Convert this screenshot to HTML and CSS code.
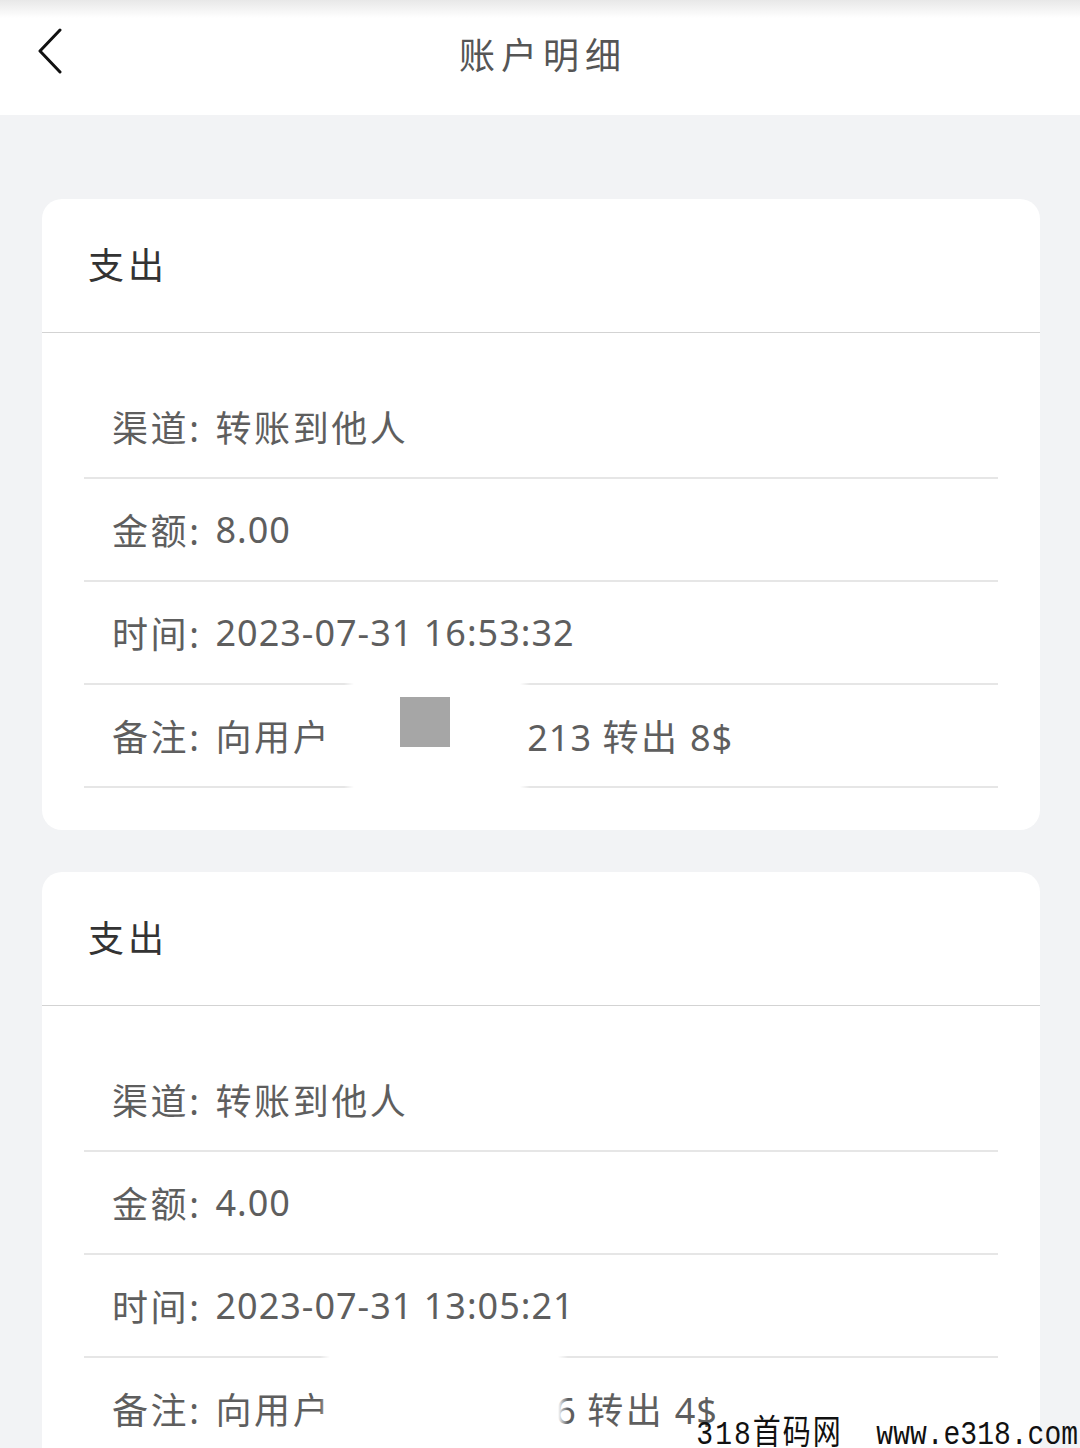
FILE: index.html
```html
<!DOCTYPE html>
<html>
<head>
    <meta charset="utf-8">
    <title>账户明细</title>
    <link rel="stylesheet" href="styles.css">
</head>
<body>
    <div class="topbar">
        <div class="back">
            <svg width="28" height="46" viewBox="0 0 28 46"><path d="M24 2 L4 23 L24 44" fill="none" stroke="#111" stroke-width="3" stroke-linecap="round" stroke-linejoin="round"/></svg>
        </div>
        <div class="title">账户明细</div>
        <div></div>
    </div>

    <div class="list">
        <div class="card">
            <div class="card-head">支出</div>
            <div class="card-body">
                <div class="row"><span class="wide">渠道:</span><span class="val wide">转账到他人</span></div>
                <div class="row"><span class="wide">金额:</span><span class="val">8.00</span></div>
                <div class="row"><span class="wide">时间:</span><span class="val">2023-07-31 16:53:32</span></div>
                <div class="row"><span class="wide">备注:</span><span class="val"><span class="wide">向用户</span><span class="gap gap-1"></span>213 <span class="wide">转出</span> 8$</span>
                    <div class="mask mask-1"><div class="mosaic"></div></div>
                </div>
            </div>
        </div>

        <div class="card">
            <div class="card-head">支出</div>
            <div class="card-body">
                <div class="row"><span class="wide">渠道:</span><span class="val wide">转账到他人</span></div>
                <div class="row"><span class="wide">金额:</span><span class="val">4.00</span></div>
                <div class="row"><span class="wide">时间:</span><span class="val">2023-07-31 13:05:21</span></div>
                <div class="row"><span class="wide">备注:</span><span class="val"><span class="wide">向用户</span><span class="gap gap-2"></span>6 <span class="wide">转出</span> 4$</span>
                    <div class="mask mask-2"></div>
                </div>
            </div>
        </div>
    </div>

    <div class="watermark"><span class="wm-site">318首码网</span>&nbsp;&nbsp;www.e318.com</div>
</body>
</html>
```

FILE: styles.css
```css
body {
    margin: 0;
    background-color: #f2f3f5;
    font-family: 'Noto Sans', 'Noto Sans CJK SC', sans-serif;
    width: 1080px;
    overflow: hidden;
}
.topbar {
    height: 115px;
    background: linear-gradient(#e8e8e8, #ffffff 18px);
    display: grid;
    grid-template-columns: 110px 1fr 110px;
    align-items: center;
}
.back {
    padding-left: 36px;
    padding-bottom: 14px;
    display: flex;
}
.title {
    text-align: center;
    font-size: 36px;
    letter-spacing: 6px;
    padding-left: 6px;
    color: #555555;
    padding-bottom: 8px;
}
.list {
    padding: 84px 40px 0 42px;
}
.card {
    background-color: #ffffff;
    border-radius: 20px;
    margin-bottom: 42px;
}
.card-head {
    height: 134px;
    box-sizing: border-box;
    padding-left: 46px;
    padding-bottom: 4px;
    display: flex;
    align-items: center;
    font-size: 36px;
    letter-spacing: 4px;
    color: #333333;
    border-bottom: 1px solid #d3d3d3;
}
.card-body {
    padding: 43px 42px 42px 42px;
}
.row {
    position: relative;
    height: 101px;
    display: flex;
    align-items: center;
    padding-left: 28px;
    font-size: 36px;
    letter-spacing: 1px;
    color: #5e5e5e;
    border-bottom: 2px solid #e6e6e6;
    white-space: nowrap;
}
.wide {
    letter-spacing: 2.6px;
}
.val {
    margin-left: 14px;
}
.gap {
    display: inline-block;
}
.gap-1 {
    width: 196px;
}
.gap-2 {
    width: 224px;
}
.mask {
    position: absolute;
    top: -2px;
    bottom: -4px;
    background: linear-gradient(90deg, rgba(255,255,255,0), #ffffff 10px, #ffffff calc(100% - 10px), rgba(255,255,255,0));
}
.mask-1 {
    left: 260px;
    width: 186px;
}
.mask-2 {
    left: 236px;
    width: 248px;
}
.mosaic {
    position: absolute;
    left: 56px;
    top: 14px;
    width: 50px;
    height: 50px;
    background-color: #a6a6a6;
}
.watermark {
    position: absolute;
    right: 2px;
    top: 1424px;
    font-family: 'Liberation Mono', 'Noto Sans CJK SC', monospace;
    font-size: 28px;
    color: #111111;
    line-height: 30px;
    transform: scaleY(1.2);
    transform-origin: bottom;
}
.wm-site {
    letter-spacing: 2px;
}
```
